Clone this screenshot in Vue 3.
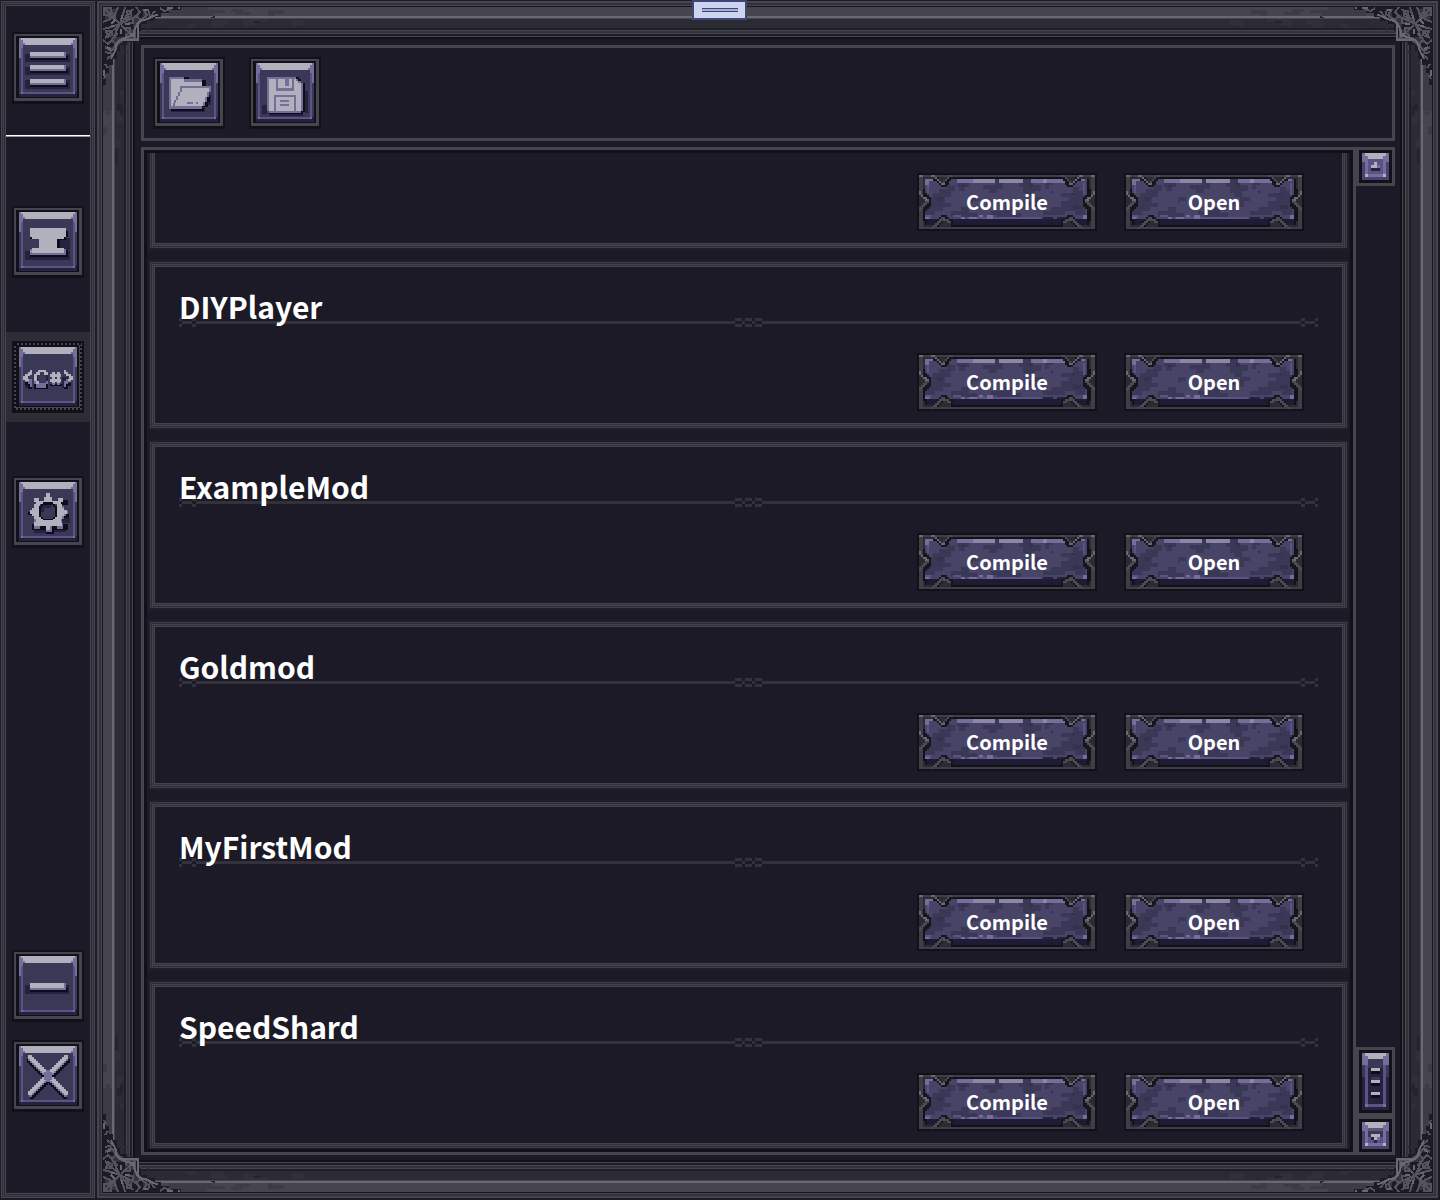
<script setup>
import { ref } from 'vue'

const tones = {
  L: '#b1b0bd', P: '#756d9a', M: '#5a5383', F: '#3a3857',
  D: '#24223f', K: '#0d0c18', G: '#46444d', H: '#6a6972', B: '#12111a',
}

// Each layer is "tone: x y w h, x y w h" and becomes one path of solid blocks.
function layers(source) {
  return source.trim().split('\n').map((line) => {
    const [tone, list] = line.split(':')
    const d = list.split(',').map((block) => {
      const [x, y, w, h] = block.trim().split(' ')
      return `M${x} ${y}h${w}v${h}h-${w}z`
    }).join('')
    return { fill: tones[tone.trim()] || tone.trim(), d }
  })
}

function cross() {
  let k = '', l = '', p = ''
  for (let i = 0; i < 19; i++) {
    const a = 16 + i * 2
    const y = 15 + i * 2
    const b = 52 - i * 2
    l += `,${a} ${y} 4 4,${b} ${y} 4 4`
    p += `,${a} ${y + 3} 3 3,${b + 1} ${y + 3} 3 3`
    k += `,${a - 1} ${y + 4} 4 4,${b + 2} ${y + 4} 4 4`
  }
  return `K:${k.slice(1)}\nP:${p.slice(1)}\nL:${l.slice(1)}\nP:32 32 8 8,34 30 4 12`
}

const plate = layers(`
B:0 0 72 72
G:2 2 68 67
B:4 4 63 62
D:7 6 58 59
P:7 6 2 20,63 6 2 20
F:7 26 2 36,63 26 2 34
M:9 8 2 54,61 8 2 54,9 60 54 2
P:9 60 2 2,61 60 2 2,9 10 2 6,61 10 2 6
F:11 10 50 50
L:9 6 54 2,11 8 50 3,13 11 46 2
P:7 6 2 4,9 8 2 4,63 6 2 4,61 8 2 4,11 11 2 2,59 11 2 2
`)

const icons = {
  menu: layers(`
D:13 22 45 8,13 35 45 8,13 48 45 9
K:18 24 38 4,18 37 38 4,18 51 38 4
P:18 20 36 6,18 33 36 6,18 47 36 6
L:18 20 34 4,18 33 34 4,18 47 34 4
`),
  anvil: layers(`
D:13 45 45 9,48 32 10 12
K:20 25 36 6,18 31 9 2,44 31 10 3,45 34 3 8,20 44 36 7,18 49 36 2
P:18 43 36 6
L:18 22 36 9,20 31 32 2,27 33 18 10,20 42 32 3,18 45 2 1,20 45 32 2
`),
  code: layers(`
D:13 42 7 5,24 33 12 12,50 36 6 11
K:13 40 5 4,16 44 4 4,22 43 14 5,38 43 12 2,53 42 6 3,52 44 4 4
P:13 38 7 3,16 40 4 3,18 42 2 4,24 42 10 5,22 39 3 4,54 38 5 3,52 40 4 3,52 42 2 4,40 42 3 2,45 42 3 2,34 40 2 3
F:26 33 8 9
L:18 29 2 4,16 31 4 3,13 33 5 2,11 35 5 4,13 38 4 2,26 29 8 2,24 31 4 3,32 31 4 3,22 33 3 7,24 40 3 3,40 31 3 11,45 31 3 11,38 33 11 3,38 38 11 3,52 29 2 4,54 31 2 4,56 33 3 2,57 35 4 4,56 38 3 2
`),
  gear: layers(`
D:22 54 12 3,40 50 14 6,50 42 8 5
K:24 24 4 4,45 24 11 5,16 36 4 3,26 49 20 5,34 54 8 4,46 48 10 6,20 48 6 6,52 38 5 4
P:20 38 34 2,22 43 28 7,34 50 6 6,22 48 6 5,45 48 6 5,48 30 4 13,54 35 2 3
L:34 17 4 6,32 21 8 4,22 22 5 4,46 22 5 4,24 25 25 3,22 28 6 15,45 28 5 15,18 34 5 4,20 32 4 8,49 34 6 4,49 32 3 8,24 41 25 6,26 46 20 4,22 46 5 4,45 46 5 4,34 50 4 4
K:31 26 10 2,29 28 14 2,27 30 18 11,29 41 14 2,31 43 10 1
F:31 29 10 14,29 31 14 10
D:29 31 3 5,31 29 8 3
`),
  minus: layers(`
D:13 35 44 9
K:18 38 38 4
P:18 33 36 7
L:18 33 34 5
`),
  close: layers(cross()),
  open: layers(`
D:18 50 34 5,54 38 4 10
K:31 20 5 2,49 23 4 7,50 38 7 7,49 44 6 6,18 51 33 3
P:16 20 15 32,31 22 18 30,56 29 2 6
L:18 22 13 27,31 25 18 24
P:27 29 31 2
L:29 31 27 4,27 35 27 5,25 40 27 5,22 45 28 4
P:27 31 2 4,25 35 2 4,23 39 2 4,21 43 2 3,20 46 2 3,56 31 2 4,54 35 2 5,52 40 2 5,50 45 2 4,34 45 6 2,43 45 2 2
`),
  save: layers(`
D:13 48 5 9,20 56 34 3,56 34 3 22
K:47 20 3 3,49 22 3 4,52 26 4 29,20 54 34 3
P:18 20 29 34,47 22 2 32,49 24 3 30,52 26 2 28,20 54 32 2
L:20 22 27 32,47 24 2 30,49 26 3 28
P:27 22 18 12,25 38 22 16
L:29 22 14 9,27 40 18 14
P:36 22 4 7,31 43 9 2,31 47 9 2
`),
}

const arrow = layers(`
#474270:0 0 9 9
P:0 0 1 3,8 0 1 3,1 1 1 7,7 1 1 7,1 7 7 1
M:2 2 5 5
L:1 0 7 1,2 1 5 1,1 7 1 1,7 7 1 1
`)
const upGlyph = layers(`
D:3 5 3 1
P:5 4 1 1
L:4 3 1 1,3 4 2 1
`)
const downGlyph = layers(`
F:2 3 5 1,2 4 1 1,6 4 1 1
D:3 5 1 1,4 6 1 1
L:3 4 3 1,4 5 1 1
P:5 5 1 1
`)
const thumb = layers(`
F:0 0 9 19
D:0 8 9 11
P:0 0 1 4,8 0 1 4,1 1 1 3,7 1 1 3
M:1 4 1 14,7 4 1 14,1 17 7 1
P:1 17 1 1,7 17 1 1
D:2 4 5 13
F:2 2 5 3,4 4 3 1,3 8 3 1
L:1 0 7 1,2 1 5 1
L:3 5 3 1,3 9 3 1,3 13 3 1
K:3 6 3 1,3 10 3 1,3 14 3 1
`)

// Purple enamel set in a stone rim, one unit is two pixels.
const enamel = [
  ...layers(`
B:0 0 90 29
#3f3e47:1 1 88 27
B:3 2 84 25
#1e1c33:5 23 80 3
#474467:4 3 81 20
`),
  {
    fill: tones.F,
    d: 'M4 12H8V10H11V8H15V6H19V9H17V12H14V15H17V17H13V19H9V21H4z M20 5H26V7H24V9H21V7H20z M33 6H39V5H43V8H40V10H36V8H33z '
      + 'M51 3H58V6H62V9H59V12H55V10H53V7H51z M64 4H68V6H66V8H64z M17 19H22V17H26V20H30V22H17z M37 19H44V17H48V20H52V22H40V21H37z '
      + 'M53 14H58V12H63V14H60V17H56V16H53z M63 19H67V17H72V14H76V12H72V10H78V7H81V9H84V21H79V19H74V21H63z M27 12H31V14H28V15H27z',
  },
  ...layers(`
#33314d:10 12 3 2,56 5 2 2,77 10 2 1,78 16 4 2,67 9 1 1,22 6 2 1
M:5 5 1 5,83 5 1 6,25 22 37 1,4 21 3 2,18 21 4 1
P:4 3 4 1,4 4 2 2,20 3 54 2,26 22 4 1,31 21 2 1,35 21 3 2,4 22 2 1,13 21 1 1,22 22 2 1,83 21 2 2,80 3 4 1
#8d86a8:28 3 25 2,63 3 2 2
F:39 3 2 2,53 3 4 2
D:63 22 5 1,70 22 5 1
`),
]

const projects = [
  { name: '' },
  { name: 'DIYPlayer' },
  { name: 'ExampleMod' },
  { name: 'Goldmod' },
  { name: 'MyFirstMod' },
  { name: 'SpeedShard' },
]

const pages = [
  { id: 'anvil', label: 'Workshop' },
  { id: 'code', label: 'Code' },
  { id: 'gear', label: 'Settings' },
]
const current = ref('code')
const corners = ['tl', 'tr', 'bl', 'br']
</script>

<template>
  <div class="page">
    <nav class="sidebar">
      <div class="cell">
        <button class="tile" aria-label="Menu">
          <svg viewBox="0 0 72 72"><path v-for="(p, i) in [...plate, ...icons.menu]" :key="i" :fill="p.fill" :d="p.d" /></svg>
        </button>
      </div>
      <hr class="rule" />
      <div class="pages">
        <div v-for="page in pages" :key="page.id" class="cell" :class="{ active: page.id === current }">
          <button class="tile" :aria-label="page.label" @click="current = page.id">
            <svg viewBox="0 0 72 72">
              <path v-for="(p, i) in [...plate, ...icons[page.id]]" :key="i" :fill="p.fill" :d="p.d" />
              <rect v-if="page.id === current" x="3" y="3" width="66" height="65" fill="none" stroke="#0d0c18" stroke-width="2" stroke-dasharray="2 2" />
            </svg>
          </button>
        </div>
      </div>
      <div class="window-keys">
        <div v-for="id in ['minus', 'close']" :key="id" class="cell">
          <button class="tile" :aria-label="id">
            <svg viewBox="0 0 72 72"><path v-for="(p, i) in [...plate, ...icons[id]]" :key="i" :fill="p.fill" :d="p.d" /></svg>
          </button>
        </div>
      </div>
    </nav>

    <main class="frame">
      <svg v-for="c in corners" :key="c" class="corner" :class="c" viewBox="0 0 220 170" aria-hidden="true">
        <path fill="#3d3b44" d="M66 0H104V3H122V6H110V9H66zM128 2H140V5H148V8H132V5H128zM165 3H181V7H171V9H165zM0 60H9V104H7V108H3V104H0zM0 120H4V128H0z" />
        <path fill="#303038" d="M58 14H80V17H92V21H70V18H58zM108 13H126V17H120V21H108zM140 12H166V15H152V19H140zM188 13H202V19H188zM13 62H19V76H20V88H17V80H13zM14 100H18V110H20V116H14zM12 132H17V141H12z" />
        <path fill="#25242c" d="M14 96H18V99H20V108H17V104H14zM12 142H15V156H12zM108 10H110V9H112V11H108zM150 14H158V16H150z" />
        <path fill="#2b2a33" d="M38 24H44V20H52V16H60V12H84V20H46V24zM24 38V44H20V52H16V60H12V84H20V46H24z" />
        <path fill="#1d1c25" d="M0 0H78V3H66V6H58V10H52V14H44V17H38V24H35V35H24V38H17V44H14V52H10V58H6V66H3V78H0z" />
        <path fill="#36353e" d="M2 2H14V8H8V14H2zM22 22H32V32H22zM30 8H36V20H30zM8 30H20V36H8zM40 6H44V12H40zM6 40H12V44H6z" />
        <g fill="none" stroke="#55545d" stroke-width="2">
          <path d="M0 15C8 13 13 9 15 0M0 22C8 21 12 18 17 17C18 11 21 6 22 0M17 17L2 2M17 17L2 31M17 17L30 2M17 17L9 33M17 17L34 9M18 18L31 30" />
          <path d="M1 1H8V5L12 8V12L8 11L5 8H1zM24 4H28V9L23 12zM3 24H9V28L5 30zM12 22L14 27L11 31M23 12H30V16H25M20 21H27V25L22 29" />
          <path d="M33 0L37 5L33 9L38 13L44 8L40 2M45 2L47 10L52 4M57 1L61 4L68 2M0 33L5 37L9 33L13 38L8 44L2 40M2 45L10 47L4 52M2 57L5 61M3 68L1 72" />
          <path d="M34 32H22C17 33 15 36 13 41M32 34V22C33 17 36 15 41 13" />
        </g>
        <g fill="none" stroke="#6a6972" stroke-width="2">
          <path d="M55 8C48 8 46 14 39 13C32 16 31 23 31 29H28C20 31 15 33 13 38C14 44 10 46 8 52" />
          <path d="M35 16V33H16M12 13L8 17M19 8V12M8 19H12M22 17H27M18 22V27M41 3H45M4 40L8 42M64 1H70M1 63V69M76 0V2M27 27H31" />
        </g>
      </svg>

      <header class="toolbar">
        <button class="tile" aria-label="Open folder">
          <svg viewBox="0 0 72 72"><path v-for="(p, i) in [...plate, ...icons.open]" :key="i" :fill="p.fill" :d="p.d" /></svg>
        </button>
        <button class="tile" aria-label="Save">
          <svg viewBox="0 0 72 72"><path v-for="(p, i) in [...plate, ...icons.save]" :key="i" :fill="p.fill" :d="p.d" /></svg>
        </button>
      </header>

      <div class="browser">
        <section class="list">
          <div class="viewport">
            <article v-for="project in projects" :key="project.name" class="card">
              <h2 class="name">{{ project.name }}</h2>
              <div class="divider" aria-hidden="true">
                <svg class="end" viewBox="0 0 17 9"><path d="M0 0h3v3h-3zM0 6h3v3h-3zM3 3h10v3h-10zM13 0h4v3h-4zM13 6h4v3h-4z" /></svg>
                <span class="line"></span>
                <svg class="knot" viewBox="0 0 27 9"><path d="M0 0h7v3h-7zM0 6h7v3h-7zM7 3h3v3h-3zM10 0h7v3h-7zM10 6h7v3h-7zM17 3h3v3h-3zM20 0h7v3h-7zM20 6h7v3h-7z" /></svg>
                <span class="line"></span>
                <svg class="end" viewBox="0 0 17 9"><path d="M0 0h4v3h-4zM0 6h4v3h-4zM4 3h10v3h-10zM14 0h3v3h-3zM14 6h3v3h-3z" /></svg>
              </div>
              <div class="actions">
                <button v-for="label in ['Compile', 'Open']" :key="label" class="slab">
                  <svg viewBox="0 0 90 29" aria-hidden="true">
                    <path v-for="(p, i) in enamel" :key="i" :fill="p.fill" :d="p.d" />
                    <g v-for="side in ['', 'translate(90 0) scale(-1 1)']" :key="side" :transform="side">
                      <path fill="#17161f" d="M8 2H18V3H17V4H16V6H15V7H12V6H11V5H10V4H8zM3 9H4V10H5V11H6V12H7V17H6V18H5V19H3zM9 26V24H10V23H11V22H12V21H15V22H16V23H18V26z" />
                      <path fill="#2c2b34" d="M3 2H9V3H3zM3 2H4V8H3zM11 2H16V3H15V4H13V5H12V4H11zM1 11H2V12H3V13H4V15H3V16H2V17H1zM12 25H13V24H15V25H17V27H11V26H12zM3 24H4V26H8V27H3z" />
                      <path fill="#4c4b54" d="M1 1H3V2H1zM13 5H14V4H15V3H16V2H18V1H16V2H15V3H14V4H13zM4 14H6V15H5V16H4V17H3V18H2V19H1V17H2V16H3V15H4zM12 22H14V23H16V24H17V25H15V24H12V25H11V26H10V27H8V28H7V27H8V26H9V25H10V24H11V23H12z" />
                      <path fill="#6a6972" d="M1 1H3V2H1zM7 1H9V2H10V3H11V4H12V5H14V6H12V5H11V4H10V3H9V2H7zM1 9H2V11H3V12H5V13H6V14H4V13H3V12H2V11H1z" />
                    </g>
                  </svg>
                  <span>{{ label }}</span>
                </button>
              </div>
            </article>
          </div>
        </section>
        <div class="scrollbar">
          <button class="knob" aria-label="Scroll up">
            <svg class="arrow" viewBox="0 0 9 9"><path v-for="(p, i) in [...arrow, ...upGlyph]" :key="i" :fill="p.fill" :d="p.d" /></svg>
          </button>
          <button class="knob grip" aria-label="Scroll position">
            <svg class="thumb" viewBox="0 0 9 19"><path v-for="(p, i) in thumb" :key="i" :fill="p.fill" :d="p.d" /></svg>
          </button>
          <button class="knob" aria-label="Scroll down">
            <svg class="arrow" viewBox="0 0 9 9"><path v-for="(p, i) in [...arrow, ...downGlyph]" :key="i" :fill="p.fill" :d="p.d" /></svg>
          </button>
        </div>
      </div>
    </main>

    <button class="handle" aria-label="Drag window"><span></span></button>
  </div>
</template>

<style>
body {
  margin: 0;
  background: #1c1a26;
}
</style>

<style scoped>
.page {
  position: relative;
  box-sizing: border-box;
  display: flex;
  gap: 2px;
  height: 100vh;
  min-height: 760px;
  padding: 1px 2px 2px 1px;
  background: #1c1a26;
  color: #fff;
  font-family: "Noto Sans CJK SC", "Noto Sans", sans-serif;
}
svg {
  display: block;
  shape-rendering: crispEdges;
}
button {
  padding: 0;
  border: 0;
  background: none;
  color: inherit;
  font: inherit;
  cursor: pointer;
}
.sidebar {
  box-sizing: border-box;
  flex: none;
  display: flex;
  flex-direction: column;
  width: 94px;
  padding: 22px 5px 77px;
  box-shadow: inset 0 0 0 1px #46444d, inset 0 0 0 2px #33323b, inset 0 0 0 3px #3f3e47, inset 0 0 0 4px #2c2b34, inset 0 0 0 5px #46444d;
}
.cell {
  display: flex;
  justify-content: center;
  align-items: center;
  height: 90px;
}
.cell.active {
  background: #2d2d36;
}
.tile {
  flex: none;
  width: 72px;
  height: 72px;
}
.rule {
  box-sizing: border-box;
  width: 100%;
  height: 2px;
  margin: 22px 0 60px;
  border: 0;
  border-bottom: 1px solid #8f959f;
  background: #fff;
}
.pages {
  display: flex;
  flex-direction: column;
  gap: 45px;
}
.window-keys {
  margin-top: auto;
}
.frame {
  position: relative;
  box-sizing: border-box;
  flex: 1;
  min-width: 0;
  display: flex;
  flex-direction: column;
  gap: 6px;
  padding: 44px 43px 43px 44px;
  box-shadow:
    inset 0 0 0 2px #46444d,
    inset 0 0 0 4px #33323b,
    inset 0 0 0 5px #46444d,
    inset 0 0 0 6px #17161f,
    inset 0 0 0 15px #46444d,
    inset 0 0 0 17px #6a6972,
    inset 0 0 0 18px #46444d,
    inset 0 0 0 27px #2b2b33,
    inset 0 0 0 29px #1f1e27,
    inset 0 0 0 30px #46444d,
    inset 0 0 0 32px #33323b,
    inset 0 0 0 33px #46444d,
    inset 0 0 0 35px #1f1e27,
    inset 0 0 0 36px #46444d,
    inset 0 0 0 38px #12111a;
}
.corner {
  position: absolute;
  width: 220px;
  height: 170px;
  pointer-events: none;
}
.tl { top: 6px; left: 6px; }
.tr { top: 6px; right: 6px; transform: scaleX(-1); }
.bl { bottom: 6px; left: 6px; transform: scaleY(-1); }
.br { bottom: 6px; right: 6px; transform: scale(-1, -1); }
.toolbar {
  box-sizing: border-box;
  flex: none;
  display: flex;
  gap: 24px;
  height: 96px;
  padding: 9px;
  border: 3px solid #46444d;
}
.browser {
  flex: 1;
  min-height: 0;
  display: flex;
}
.list {
  box-sizing: border-box;
  flex: 1;
  min-width: 0;
  display: flex;
  padding: 3px;
  border: 3px solid #46444d;
  box-shadow: inset 0 0 0 3px #12111a;
}
.viewport {
  flex: 1;
  min-width: 0;
  display: flex;
  flex-direction: column;
  justify-content: flex-end;
  gap: 14px;
  padding: 0 3px 1px;
  overflow: hidden;
}
.card {
  box-sizing: border-box;
  flex: none;
  height: 166px;
  padding: 22px 29px 0;
  box-shadow:
    0 0 0 2px #201f29,
    inset 0 0 0 1px #3f3e47,
    inset 0 0 0 2px #2c2b34,
    inset 0 0 0 3px #46444d,
    inset 0 0 0 4px #33323b,
    inset 0 0 0 5px #46444d;
}
.name {
  position: relative;
  z-index: 1;
  height: 44px;
  margin: 0 0 -10px;
  font-size: 30px;
  font-weight: 700;
  line-height: 44px;
  white-space: nowrap;
}
.divider {
  display: flex;
  align-items: center;
  height: 9px;
}
.divider path {
  fill: #33323c;
}
.end {
  flex: none;
  width: 17px;
  height: 9px;
}
.knot {
  flex: none;
  width: 27px;
  height: 9px;
}
.line {
  flex: 1;
  height: 3px;
  background: #33323c;
}
.actions {
  display: flex;
  justify-content: flex-end;
  gap: 27px;
  margin: 26px 14px 0 0;
}
.slab {
  display: grid;
  place-items: center;
  width: 180px;
  height: 58px;
  font-size: 20px;
  font-weight: 700;
  line-height: 28px;
}
.slab svg,
.slab span {
  grid-area: 1 / 1;
}
.slab svg {
  width: 180px;
  height: 58px;
}
.scrollbar {
  flex: none;
  display: flex;
  flex-direction: column;
  width: 39px;
}
.knob {
  flex: none;
  padding: 3px;
  border: 3px solid #46444d;
  background: #12111a;
}
.knob.grip {
  margin-top: auto;
}
.arrow {
  width: 27px;
  height: 27px;
}
.thumb {
  width: 27px;
  height: 57px;
}
.handle {
  position: absolute;
  top: 0;
  left: 50%;
  display: grid;
  place-items: center;
  box-sizing: border-box;
  width: 55px;
  height: 20px;
  margin-left: -28px;
  border: 2px solid #3d4777;
  background: #ccd4ef;
}
.handle span {
  box-sizing: border-box;
  width: 36px;
  height: 4px;
  border: solid #3d4777;
  border-width: 1px 0;
  background: #a5add0;
}
</style>
